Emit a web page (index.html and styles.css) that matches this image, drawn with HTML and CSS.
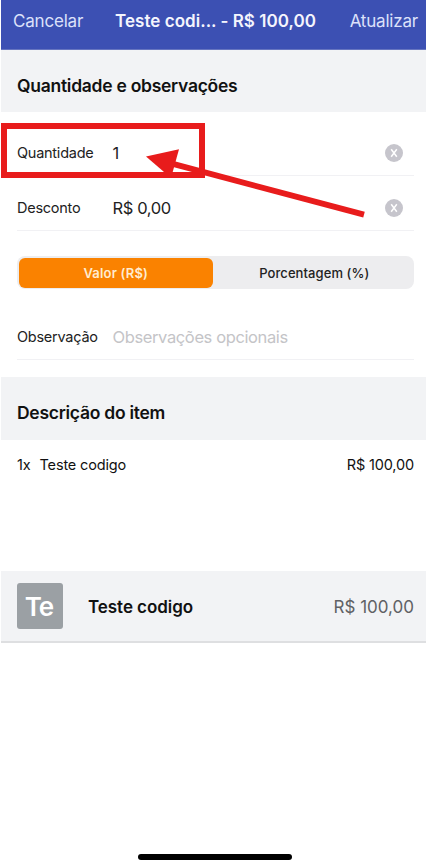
FILE: index.html
```
<!DOCTYPE html>
<html lang="pt-BR">
<head>
    <meta charset="UTF-8">
    <meta name="viewport" content="width=device-width, initial-scale=1.0">
    <title>Teste codigo</title>
    <link rel="stylesheet" href="styles.css">
</head>
<body>
    <div class="screen">
        <header class="navbar">
            <span class="nav-action">Cancelar</span>
            <h1>Teste codi... - R$ 100,00</h1>
            <span class="nav-action">Atualizar</span>
        </header>

        <h2 class="section-title">Quantidade e observações</h2>

        <div class="form">
            <div class="field quantity">
                <span class="label">Quantidade</span>
                <span class="value">1</span>
                <svg class="clear" viewBox="0 0 18 18">
                    <circle cx="9" cy="9" r="9" fill="#c6c5cc"/>
                    <path d="M6.2 5.2L11.8 12.8M11.8 5.2L6.2 12.8" stroke="#fff" stroke-width="1.5"/>
                </svg>
            </div>
            <div class="field discount">
                <span class="label">Desconto</span>
                <span class="value">R$ 0,00</span>
                <svg class="clear" viewBox="0 0 18 18">
                    <circle cx="9" cy="9" r="9" fill="#c6c5cc"/>
                    <path d="M6.2 5.2L11.8 12.8M11.8 5.2L6.2 12.8" stroke="#fff" stroke-width="1.5"/>
                </svg>
            </div>
            <div class="segmented">
                <span class="segment active">Valor (R$)</span>
                <span class="segment">Porcentagem (%)</span>
            </div>
            <div class="field note">
                <span class="label">Observação</span>
                <span class="value placeholder">Observações opcionais</span>
            </div>
        </div>

        <h2 class="section-title description">Descrição do item</h2>

        <div class="item-line">
            <span class="item-qty">1x</span>
            <span class="item-name">Teste codigo</span>
            <span class="item-price">R$ 100,00</span>
        </div>

        <div class="product">
            <div class="avatar">Te</div>
            <span class="product-name">Teste codigo</span>
            <span class="product-price">R$ 100,00</span>
        </div>

        <div class="home-indicator"></div>
    </div>

    <!-- highlight box and arrow over the quantity field -->
    <svg class="annotation" viewBox="0 0 426 864">
        <rect x="4" y="126" width="198" height="49" fill="none" stroke="#e81c1c" stroke-width="6"/>
        <path d="M172 163.7L364 214.7" stroke="#e81c1c" stroke-width="6"/>
        <path d="M146 156.5L179 149.3L171 178Z" fill="#e81c1c"/>
    </svg>
</body>
</html>
```
FILE: styles.css
```
* {
    box-sizing: border-box;
}

body {
    margin: 0;
    background-color: #fff;
    color: #111;
    font-family: Inter, "Liberation Sans", sans-serif;
    position: relative;
}

.screen {
    display: flex;
    flex-direction: column;
    height: 864px;
    margin-left: 1px;
}

.navbar {
    display: flex;
    align-items: center;
    height: 50px;
    padding: 0 8px 8px 12px;
    background-color: #3c50b3;
    border-bottom: 1px solid #6675c0;
    white-space: nowrap;
}

h1 {
    margin: 0 auto 0 32px;
    color: #f4f5fd;
    font-size: 17px;
    font-weight: 600;
    letter-spacing: 0.03px;
}

.nav-action {
    color: #dce1fa;
    font-size: 17px;
    letter-spacing: -0.2px;
}

.section-title {
    display: flex;
    align-items: center;
    height: 62px;
    margin: 0;
    padding: 8px 16px 0;
    background-color: #f2f3f5;
    font-size: 17.5px;
    font-weight: 600;
    letter-spacing: -0.27px;
}

.form {
    height: 265px;
    padding: 8px 12px 0 16px;
}

.field {
    display: flex;
    align-items: center;
    height: 55px;
    padding-right: 11px;
    border-bottom: 1px solid #f1f1f4;
}

.quantity {
    height: 56px;
    padding-top: 10px;
}

.discount {
    padding-top: 9px;
}

.label {
    width: 95.5px;
    color: #222;
    font-size: 14.5px;
    letter-spacing: -0.25px;
}

.value {
    color: #222;
    font-size: 16.5px;
    letter-spacing: -0.38px;
}

.placeholder {
    color: #c4c4c7;
}

.clear {
    width: 18px;
    height: 18px;
    margin-left: auto;
}

.segmented {
    display: flex;
    height: 33px;
    margin-top: 25px;
    padding: 2px 2px 1px;
    border-radius: 8px;
    background-color: #ededef;
}

.segment {
    flex: 1;
    display: flex;
    align-items: center;
    justify-content: center;
    padding-left: 4px;
    border-radius: 6px;
    color: #222;
    font-size: 13px;
    font-weight: 500;
    letter-spacing: 0.08px;
}

.active {
    flex: 0 0 193.5px;
    padding-left: 0;
    background-color: #fa8200;
    color: #ffecd0;
    font-weight: 600;
    letter-spacing: 0.2px;
}

.note {
    height: 48px;
    margin-top: 23px;
    padding-top: 2px;
}

.description {
    height: 63px;
}

.item-line {
    display: flex;
    height: 131px;
    padding: 17px 12px 0 16px;
    font-size: 14.5px;
    line-height: 16px;
    letter-spacing: -0.15px;
}

.item-name {
    margin-left: 9px;
}

.item-price {
    margin-left: auto;
}

.product {
    display: flex;
    align-items: center;
    height: 72px;
    padding: 0 12px 0 16px;
    background-color: #f2f3f5;
    border-bottom: 2px solid #dedfe1;
}

.avatar {
    display: flex;
    align-items: center;
    justify-content: center;
    width: 46px;
    height: 46px;
    padding-right: 2px;
    border-radius: 3px;
    background-color: #9ba0a4;
    color: #fff;
    font-size: 26px;
    font-weight: 600;
    letter-spacing: -1px;
}

.product-name {
    margin-left: 25px;
    padding-top: 2px;
    font-size: 17px;
    font-weight: 600;
    letter-spacing: -0.06px;
}

.product-price {
    margin-left: auto;
    padding-top: 2px;
    color: #606164;
    font-size: 17px;
}

.home-indicator {
    width: 154px;
    height: 6px;
    margin: auto auto 4px 137px;
    border-radius: 3px;
    background-color: #000;
}

.annotation {
    position: absolute;
    top: 0;
    left: 0;
    width: 426px;
    height: 864px;
    pointer-events: none;
}
```
